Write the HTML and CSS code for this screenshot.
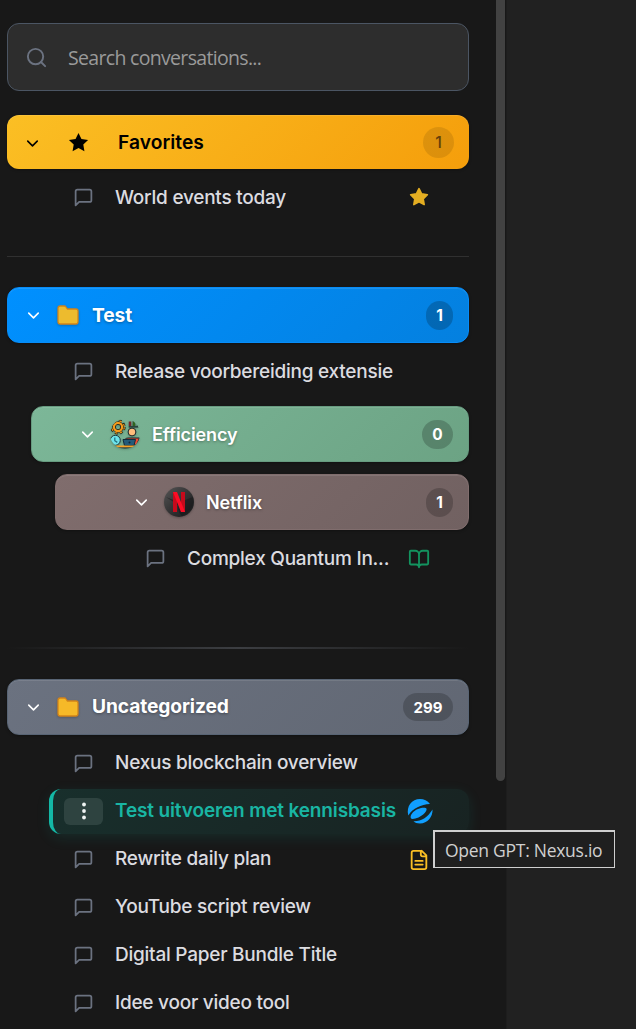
FILE: index.html
```html
<!DOCTYPE html>
<html lang="nl">
<head>
<meta charset="utf-8">
<title>Conversations</title>
<link rel="stylesheet" href="styles.css">
</head>
<body>
<svg class="sprite" aria-hidden="true">
  <symbol id="chat" viewBox="0 0 24 24"><path d="M21 15a2 2 0 0 1-2 2H7l-4 4V5a2 2 0 0 1 2-2h14a2 2 0 0 1 2 2z"/></symbol>
  <symbol id="chevron" viewBox="0 0 24 24"><path d="m6 9 6 6 6-6"/></symbol>
  <symbol id="star" viewBox="0 0 24 24"><path d="M12 2l3.09 6.26L22 9.27l-5 4.87 1.18 6.88L12 17.77l-6.18 3.25L7 14.14 2 9.27l6.91-1.01z"/></symbol>
  <symbol id="folder" viewBox="0 0 24 22"><path d="M2 4.2Q2 2 4.2 2H8.2Q9.4 2 10 3L11.4 5H20Q22 5 22 7V17.8Q22 20 19.800 20H4.200Q2 20 2 17.800Z"/></symbol>
</svg>
<div class="app">
  <aside class="sidebar">
    <div class="content">
      <label class="search">
        <svg class="search-icon" viewBox="0 0 24 24"><circle cx="11" cy="11" r="8"/><path d="m21 21-4.350-4.350"/></svg>
        <span class="search-text">Search conversations...</span>
      </label>

      <section class="group group-favorites">
        <header class="bar bar-favorites">
          <svg class="chevron"><use href="#chevron"/></svg>
          <svg class="bar-star"><use href="#star"/></svg>
          <span class="bar-title title-favorites">Favorites</span>
          <span class="count count-round">1</span>
        </header>
        <div class="row">
          <svg class="chat"><use href="#chat"/></svg>
          <span class="row-title">World events today</span>
          <svg class="row-star"><use href="#star"/></svg>
        </div>
      </section>

      <section class="group group-test">
        <header class="bar bar-test">
          <svg class="chevron"><use href="#chevron"/></svg>
          <svg class="folder"><use href="#folder"/></svg>
          <span class="bar-title title-root">Test</span>
          <span class="count">1</span>
        </header>
        <div class="row">
          <svg class="chat"><use href="#chat"/></svg>
          <span class="row-title">Release voorbereiding extensie</span>
        </div>
        <header class="bar bar-efficiency">
          <svg class="chevron"><use href="#chevron"/></svg>
          <svg class="avatar" viewBox="0 0 30 30">
            <clipPath id="round"><circle cx="15" cy="15" r="15"/></clipPath>
            <g clip-path="url(#round)">
              <circle cx="8" cy="8" r="6" fill="none" stroke="#17201d" stroke-width="3.200" stroke-dasharray="2.700 2"/>
              <circle cx="8" cy="8" r="5.900" fill="none" stroke="#f59a1b" stroke-width="1.900" stroke-dasharray="2.300 2.400" stroke-dashoffset="-.2"/>
              <circle cx="8" cy="8" r="4" fill="none" stroke="#17201d" stroke-width="3.500"/>
              <circle cx="8" cy="8" r="4.100" fill="none" stroke="#f59a1b" stroke-width="2.200"/>
              <path d="M18.700 7.800h10" stroke="#142724" stroke-width="1.200"/>
              <path d="M20 2.500v4.500" stroke="#71262a" stroke-width="2.500"/>
              <path d="M24 1.500v5.500" stroke="#16251c" stroke-width="2.600"/>
              <path d="M24 3v4" stroke="#4ba51e" stroke-width="1"/>
              <path d="M27.500 5v2.500" stroke="#183129" stroke-width="1.500"/>
              <circle cx="22" cy="13" r="3.900" fill="#ffbd7b" stroke="#17252b"/>
              <path d="M15 20.500q1-1.500 3-1.500h11.500l-3 7H17z" fill="#ef4b32" stroke="#17252b"/>
              <path d="M13 20.500h12.500l-1.500 6H14.500z" fill="#235a79" stroke="#122b3b"/>
              <circle cx="19.500" cy="23.500" r="1" fill="#11263b"/>
              <circle cx="5.300" cy="21.300" r="5" fill="#6ee4eb" stroke="#21363c" stroke-width="1"/>
              <path d="M4.800 18.500v3.200l2.500 1.700" fill="none" stroke="#237282" stroke-width="1.300"/>
              <path d="M4 27.500h23" stroke="#f7a126" stroke-width="2"/>
              <path d="M8 29h15" stroke="#17252b"/>
            </g>
          </svg>
          <span class="bar-title title-nested">Efficiency</span>
          <span class="count count-wide">0</span>
        </header>
        <header class="bar bar-netflix">
          <svg class="chevron"><use href="#chevron"/></svg>
          <svg class="avatar" viewBox="0 0 30 30">
            <defs><linearGradient id="disc" x1="0" y1="0" x2="1" y2="1"><stop offset="0" stop-color="#555"/><stop offset=".45" stop-color="#363637"/><stop offset="1" stop-color="#171718"/></linearGradient></defs>
            <circle cx="15" cy="15" r="15" fill="url(#disc)"/>
            <path d="M2 10Q15 17 29 10Q32 22 18 29Q13 24 14 18Z" fill="#18181a" opacity=".55"/>
            <path d="M9 5h4v20H9zM17 5h4v20h-4z" fill="#c50a1c"/>
            <path d="M9 5h4l8 20h-4z" fill="#fc0d25"/>
          </svg>
          <span class="bar-title title-nested">Netflix</span>
          <span class="count">1</span>
        </header>
        <div class="row row-nested">
          <svg class="chat"><use href="#chat"/></svg>
          <span class="row-title">Complex Quantum In...</span>
          <svg class="book" viewBox="0 0 24 24"><path d="M12 7v14M3 18a1 1 0 0 1-1-1V4a1 1 0 0 1 1-1h5a4 4 0 0 1 4 4 4 4 0 0 1 4-4h5a1 1 0 0 1 1 1v13a1 1 0 0 1-1 1h-6a3 3 0 0 0-3 3 3 3 0 0 0-3-3z"/></svg>
        </div>
      </section>

      <div class="separator"></div>

      <section class="group group-uncategorized">
        <header class="bar bar-uncategorized">
          <svg class="chevron"><use href="#chevron"/></svg>
          <svg class="folder"><use href="#folder"/></svg>
          <span class="bar-title title-root">Uncategorized</span>
          <span class="count count-long">299</span>
        </header>
        <div class="row">
          <svg class="chat"><use href="#chat"/></svg>
          <span class="row-title">Nexus blockchain overview</span>
        </div>
        <div class="row row-active">
          <span class="more"><svg class="dots" viewBox="0 0 6 20"><circle cx="3" cy="3.500" r="1.900"/><circle cx="3" cy="10" r="1.900"/><circle cx="3" cy="16.500" r="1.900"/></svg></span>
          <span class="row-title">Test uitvoeren met kennisbasis</span>
          <svg class="nexus" viewBox="0 0 26 26">
            <path d="M1.300 17.500C-1 8 5 1 13 1c4 0 7.500 1.500 10 5C14 6.500 6 10 1.300 17.500z"/>
            <path d="M4 20.500C2.500 17.500 6 13 11 11c4-1.600 8-1.700 8.500-.2.800 2.200-3.500 6.800-8 8.600-3 1.200-6 2-7.500 1.100z"/>
            <path d="M25.500 11.500c.5 7-5 14-12.500 14-3 0-5-.8-6.500-2.200 8 .2 14.500-4.300 19-11.800z"/>
          </svg>
        </div>
        <div class="row">
          <svg class="chat"><use href="#chat"/></svg>
          <span class="row-title">Rewrite daily plan</span>
          <svg class="doc" viewBox="0 0 24 24"><path d="M15 2H6a2 2 0 0 0-2 2v16a2 2 0 0 0 2 2h12a2 2 0 0 0 2-2V7zM14 2v4a2 2 0 0 0 2 2h4M15 2l5 5M8 13h8M8 17h8"/></svg>
        </div>
        <div class="row">
          <svg class="chat"><use href="#chat"/></svg>
          <span class="row-title">YouTube script review</span>
        </div>
        <div class="row">
          <svg class="chat"><use href="#chat"/></svg>
          <span class="row-title">Digital Paper Bundle Title</span>
        </div>
        <div class="row">
          <svg class="chat"><use href="#chat"/></svg>
          <span class="row-title">Idee voor video tool</span>
        </div>
      </section>
    </div>
    <div class="scrollbar"><div class="thumb"></div></div>
  </aside>
  <main class="main"></main>
</div>
<div class="tooltip"><span class="tooltip-text">Open GPT: Nexus.io</span></div>
</body>
</html>
```
FILE: styles.css
```css
* { box-sizing: border-box; }

body {
  margin: 0;
  background: #212121;
  font-family: Inter, "Liberation Sans", sans-serif;
  overflow: hidden;
}

svg { display: block; flex: none; overflow: visible; }
.sprite { position: absolute; width: 0; height: 0; }

.app { display: flex; height: 1029px; overflow: hidden; }

.sidebar {
  display: flex;
  justify-content: space-between;
  width: 507px;
  background: #181818;
  border-right: 1px solid #1d1d1d;
}

.content { width: 469px; padding: 23px 0 0 7px; }
.main { flex: 1; }

.scrollbar { width: 10px; }
.thumb { width: 9px; height: 781px; background: #424242; border-radius: 0 0 5px 5px; }

.search {
  display: flex;
  align-items: center;
  gap: 20px;
  height: 68px;
  padding-left: 17px;
  border: 1px solid #4b5563;
  border-radius: 12px;
  background: #2d2d2d;
}
.search-icon { width: 23px; height: 23px; fill: none; stroke: #6b7280; stroke-width: 2; stroke-linecap: round; }
.search-text {
  padding-top: 1px;
  font-family: "Open Sans", "Noto Sans", sans-serif;
  font-size: 19.500px;
  letter-spacing: -0.68px;
  color: #9a9a9a;
}

.group-favorites { height: 142px; margin-top: 24px; border-bottom: 1px solid #303030; }
.group-test { margin-top: 30px; }

.bar {
  display: flex;
  align-items: center;
  height: 56px;
  padding: 0 15px 0 16px;
  border: 1px solid rgba(255, 255, 255, 0.1);
  border-radius: 12px;
  color: #fff;
  box-shadow: 0 1px 3px rgba(0, 0, 0, 0.3), inset 0 1px 0 rgba(255, 255, 255, 0.1);
}
.bar-favorites {
  height: 54px;
  padding: 0 15px 0 16px;
  border: 0;
  background: linear-gradient(135deg, #fbbf24, #f59e0b);
  color: #000;
}
.bar-test { border-color: #078cf7; background: linear-gradient(135deg, #0090ff, #0480df); }
.bar-efficiency { margin: 12px 0 0 24px; padding-left: 46px; border-color: #679b80; background: linear-gradient(135deg, #7cb798, #6ca384); }
.bar-netflix { margin: 12px 0 0 48px; padding-left: 76px; border-color: #806d6d; background: linear-gradient(135deg, #806d6d, #716161); }
.bar-uncategorized { border-color: #586474; background: linear-gradient(135deg, #6b7280, #616773); }

.chevron { width: 19px; height: 19px; fill: none; stroke: currentColor; stroke-width: 2; stroke-linecap: round; stroke-linejoin: round; }
.bar-favorites .chevron { margin-right: 25px; margin-top: 3px; }
.bar-star { width: 23px; height: 23px; margin-right: 28px; }
.folder { width: 24px; height: 22px; margin: 0 12px 0 13px; fill: #edbb2e; stroke: #d38419; stroke-width: 1.3; filter: drop-shadow(0 1px 1px rgba(0, 0, 0, 0.2)); }
.bar-uncategorized .folder { fill: #f6b928; }
.avatar { width: 30px; height: 30px; margin: 0 12px 0 13px; filter: drop-shadow(0 1px 1px rgba(0, 0, 0, 0.25)); }

.bar-title { flex: 1; font-size: 19px; font-weight: 600; text-shadow: 0 1px 3px rgba(0, 0, 0, 0.35); white-space: nowrap; }
.title-favorites { font-size: 19.2px; letter-spacing: 0.05px; text-shadow: none; }
.title-root { font-size: 19.2px; font-weight: 700; letter-spacing: -0.1px; }
.title-nested { font-size: 18px; letter-spacing: -0.1px; padding-top: 1px; }

.count {
  display: flex;
  align-items: center;
  justify-content: center;
  width: 27px;
  height: 29px;
  border-radius: 14.5px;
  background: rgba(0, 0, 0, 0.2);
  font-size: 15.4px;
  font-weight: 700;
}
.count-round { width: 31px; height: 31px; border-radius: 50%; background: rgba(0, 0, 0, 0.1); color: #65400a; font-size: 16px; font-weight: 500; }
.count-wide { width: 31px; }
.count-long { width: 50px; height: 28px; font-size: 15px; }

.row {
  display: flex;
  align-items: center;
  height: 45px;
  margin: 3px 0 0 42px;
  padding: 0 37px 0 24px;
  color: #dcdce0;
}
.bar + .row { margin-top: 6px; }
.row-nested { margin-left: 114px; }
.row-title { flex: 1; font-size: 19px; font-weight: 500; letter-spacing: -0.24px; white-space: nowrap; }
.group-uncategorized .row-title,
.group-uncategorized .bar-title { padding-bottom: 2px; }
.chat { width: 21px; height: 21px; margin-right: 21px; fill: none; stroke: #6b7280; stroke-width: 2; stroke-linecap: round; stroke-linejoin: round; }
.row-star { width: 20px; height: 20px; margin: 0 3px 1px 0; fill: #e4ae22; stroke: #e4ae22; stroke-width: 2; stroke-linejoin: round; }
.book { width: 22px; height: 22px; margin-right: 2px; fill: none; stroke: #13935f; stroke-width: 2; stroke-linecap: round; stroke-linejoin: round; }
.doc { width: 22px; height: 22px; margin-right: 2px; fill: none; stroke: #fbbf24; stroke-width: 2; stroke-linecap: round; stroke-linejoin: round; }

.row-active {
  padding: 0 37px 1px 11px;
  border-left: 4px solid #14b8a6;
  border-radius: 12px;
  background: linear-gradient(135deg, #182f2c, #182322);
  color: #19b5a3;
  box-shadow: 0 4px 14px rgba(20, 184, 166, 0.12);
}
.more { display: flex; align-items: center; justify-content: center; width: 39px; height: 27px; margin-right: 12px; border-radius: 6px; background: #2e4340; }
.dots { width: 6px; height: 20px; fill: #f0f4f3; }
.nexus { width: 26px; height: 26px; margin-right: -1px; fill: #109fff; }
.row-active .row-title { font-weight: 600; letter-spacing: -0.14px; }

.separator { height: 2px; margin: 66px 0 30px; background: linear-gradient(90deg, transparent, #3c3e42, transparent); }

/* Floats over the list and the main pane */
.tooltip {
  position: absolute;
  left: 433px;
  top: 830px;
  display: flex;
  align-items: center;
  width: 182px;
  height: 38px;
  padding-left: 10px;
  border: 2px solid #cfcfcf;
  border-bottom-width: 1px;
  border-right-width: 1px;
  background: #1f1f1f;
  color: #d0d0d0;
}
.tooltip-text { font-family: "Open Sans", "Noto Sans", sans-serif; font-size: 17.5px; letter-spacing: -0.27px; white-space: nowrap; }
```
